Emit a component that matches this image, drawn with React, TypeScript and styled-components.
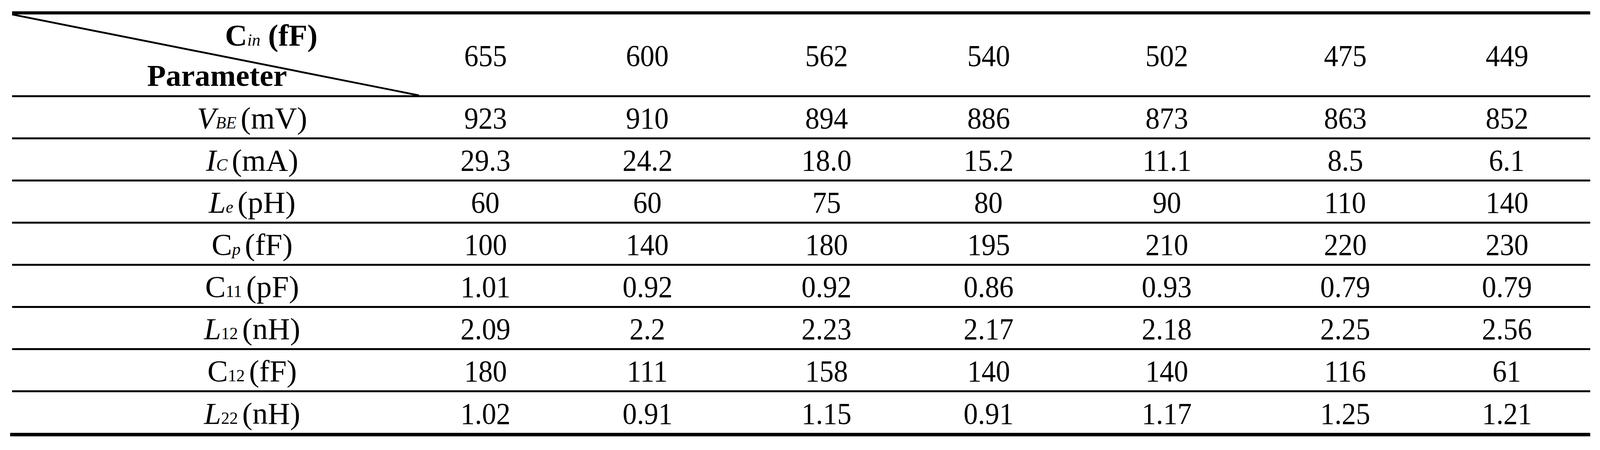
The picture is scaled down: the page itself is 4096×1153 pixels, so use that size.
import React from "react";
import styled, { createGlobalStyle } from "styled-components";

const S = 0.926;
const u = (v: number) => `${(v * S).toFixed(2)}px`;

const FIRST_COL = 1125;
const DATA_COLS = [368, 528, 462, 434, 552, 434, 460];
const GRID = `${u(FIRST_COL)} ${DATA_COLS.map(u).join(" ")}`;

interface Label {
  main: string;
  mainItalic?: boolean;
  sub: string;
  subItalic?: boolean;
  unit: string;
}

interface Row {
  label: Label;
  values: string[];
}

const capacitances = ["655", "600", "562", "540", "502", "475", "449"];

const rows: Row[] = [
  {
    label: { main: "V", mainItalic: true, sub: "BE", subItalic: true, unit: "(mV)" },
    values: ["923", "910", "894", "886", "873", "863", "852"],
  },
  {
    label: { main: "I", mainItalic: true, sub: "C", subItalic: true, unit: "(mA)" },
    values: ["29.3", "24.2", "18.0", "15.2", "11.1", "8.5", "6.1"],
  },
  {
    label: { main: "L", mainItalic: true, sub: "e", subItalic: true, unit: "(pH)" },
    values: ["60", "60", "75", "80", "90", "110", "140"],
  },
  {
    label: { main: "C", sub: "p", subItalic: true, unit: "(fF)" },
    values: ["100", "140", "180", "195", "210", "220", "230"],
  },
  {
    label: { main: "C", sub: "11", unit: "(pF)" },
    values: ["1.01", "0.92", "0.92", "0.86", "0.93", "0.79", "0.79"],
  },
  {
    label: { main: "L", mainItalic: true, sub: "12", unit: "(nH)" },
    values: ["2.09", "2.2", "2.23", "2.17", "2.18", "2.25", "2.56"],
  },
  {
    label: { main: "C", sub: "12", unit: "(fF)" },
    values: ["180", "111", "158", "140", "140", "116", "61"],
  },
  {
    label: { main: "L", mainItalic: true, sub: "22", unit: "(nH)" },
    values: ["1.02", "0.91", "1.15", "0.91", "1.17", "1.25", "1.21"],
  },
];

function ParamLabel({ label }: { label: Label }) {
  return (
    <>
      <Main italic={label.mainItalic}>{label.main}</Main>
      <Sub italic={label.subItalic}>{label.sub} </Sub>
      {label.unit}
    </>
  );
}

export default function App() {
  return (
    <>
      <GlobalStyle />
      <Page>
        <Table>
          <HeaderRow>
            <CornerCell>
              <Diagonal viewBox="0 0 100 100" preserveAspectRatio="none">
                <line
                  x1="0"
                  y1="0"
                  x2="100"
                  y2="100"
                  stroke="#000"
                  strokeWidth={5 * S}
                  vectorEffect="non-scaling-stroke"
                />
              </Diagonal>
              <CornerText shift={309}>
                C<Sub italic light>in</Sub> (fF)
              </CornerText>
              <CornerText shift={9}>Parameter</CornerText>
            </CornerCell>
            {capacitances.map((c, i) => (
              <NumCell key={i}>
                <Num>{c}</Num>
              </NumCell>
            ))}
          </HeaderRow>
          {rows.map((row, r) => (
            <BodyRow key={r} last={r === rows.length - 1}>
              <LabelCell>
                <span>
                  <ParamLabel label={row.label} />
                </span>
              </LabelCell>
              {row.values.map((v, i) => (
                <NumCell key={i}>
                  <Num>{v}</Num>
                </NumCell>
              ))}
            </BodyRow>
          ))}
        </Table>
        <BottomRule />
      </Page>
    </>
  );
}

const GlobalStyle = createGlobalStyle`
  html, body {
    margin: 0;
    padding: 0;
    background: #ffffff;
  }
  body {
    font-family: "Liberation Serif", "Times New Roman", serif;
    color: #000000;
  }
`;

const Page = styled.div`
  padding-top: ${u(31)};
  padding-left: ${u(33)};
`;

const Table = styled.div`
  width: ${u(4363)};
  border-top: ${u(9)} solid #000;
`;

const HeaderRow = styled.div`
  display: grid;
  grid-template-columns: ${GRID};
  height: ${u(224)};
  border-bottom: ${u(5.4)} solid #000;
`;

const BodyRow = styled.div<{ last?: boolean }>`
  display: grid;
  grid-template-columns: ${GRID};
  height: ${(p) => (p.last ? u(112.8) : u(111.2))};
  border-bottom: ${(p) => (p.last ? "none" : `${u(5.4)} solid #000`)};
`;

const CornerCell = styled.div`
  position: relative;
  display: flex;
  flex-direction: column;
  justify-content: space-between;
  padding-top: ${u(16.8)};
  padding-bottom: ${u(11.2)};
  font-size: ${u(85)};
  line-height: 1;
  font-weight: 700;
`;

const Diagonal = styled.svg`
  position: absolute;
  left: 0;
  top: 0;
  width: 100%;
  height: 100%;
  overflow: visible;
`;

const CornerText = styled.div<{ shift: number }>`
  position: relative;
  padding-left: ${(p) => u(p.shift)};
  text-align: center;
  white-space: pre;
`;

const LabelCell = styled.div`
  display: flex;
  align-items: center;
  justify-content: center;
  padding-left: ${u(203)};
  padding-top: ${u(6)};
  font-size: ${u(85)};
  line-height: 1;
  white-space: pre;
`;

const Main = styled.span<{ italic?: boolean }>`
  font-style: ${(p) => (p.italic ? "italic" : "normal")};
`;

const Sub = styled.span<{ italic?: boolean; light?: boolean }>`
  font-size: 0.55em;
  font-style: ${(p) => (p.italic ? "italic" : "normal")};
  font-weight: ${(p) => (p.light ? 400 : "inherit")};
  vertical-align: baseline;
`;

const NumCell = styled.div`
  display: flex;
  align-items: center;
  justify-content: center;
  padding-top: ${u(6)};
  font-size: ${u(85)};
  line-height: 1;
`;

const Num = styled.span`
  display: inline-block;
  transform: scaleX(0.93);
`;

const BottomRule = styled.div`
  margin-left: ${u(-5)};
  width: ${u(4368)};
  height: ${u(9)};
  background: #000;
`;
